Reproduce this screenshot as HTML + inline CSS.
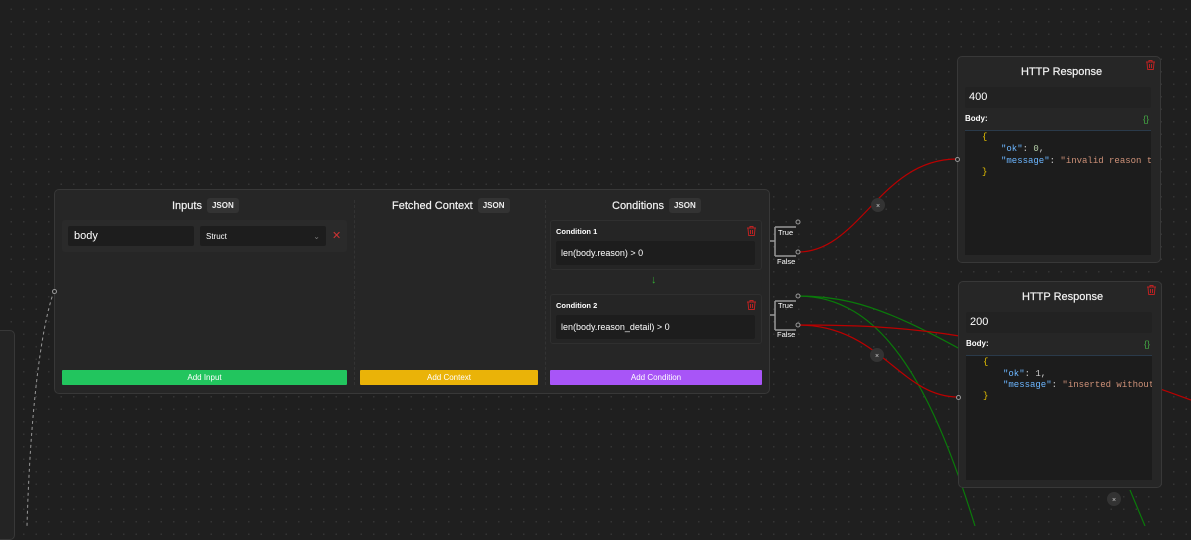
<!DOCTYPE html>
<html><head><meta charset="utf-8"><style>
*{box-sizing:border-box;margin:0;padding:0}
body{width:1191px;height:526px;overflow:hidden;background:#1f1f1f;background-image:radial-gradient(circle,#353535 0.7px,transparent 1px);background-size:12.5px 12.5px;background-position:5px 3px;font-family:"Liberation Sans",sans-serif;color:#fff;position:relative}
.abs{position:absolute}
.node{position:absolute;background:#262626;border:1px solid #383838;border-radius:5px}
.h{font-size:11px;color:#f2f2f2;-webkit-text-stroke:0.2px #f2f2f2}
.tag{display:inline-block;background:#333;border-radius:3px;font-size:8px;font-weight:bold;padding:3px 5px;color:#eee;margin-left:5px;vertical-align:1px;-webkit-text-stroke:0}
.btn{position:absolute;height:15px;font-size:8px;text-align:center;line-height:15px;color:#fff;border-radius:1px}
.inp{position:absolute;background:#1d1d1d;border-radius:2px}
.cond{position:absolute;background:#252525;border:1px solid #2f2f2f;border-radius:3px}
.code{font-family:"Liberation Mono","DejaVu Sans Mono",monospace;font-size:9px;position:absolute;white-space:pre}
.lbl{font-size:7.5px;font-weight:bold}
</style></head><body>
<svg class="abs" style="left:0;top:0" width="1191" height="526">
<path d="M54 291 C40 330 30 420 27 526" stroke="#999" stroke-width="1" stroke-dasharray="3 3" fill="none"/>
<path d="M798 252 C860 252 880 159 957 159" stroke="#b00" stroke-width="1.2" fill="none"/>
<path d="M798 296 C880 296 930 330 1150 460" stroke="#0a7a0a" stroke-width="1.2" fill="none"/>
<path d="M1130 490 L1145 526" stroke="#0a7a0a" stroke-width="1.2" fill="none"/>
<path d="M798 296 C880 296 930 380 975 526" stroke="#0a7a0a" stroke-width="1.2" fill="none"/>
<path d="M798 325 C880 325 900 397 958 397" stroke="#b00" stroke-width="1.2" fill="none"/>
<path d="M798 325 C900 325 1000 330 1191 400" stroke="#b00" stroke-width="1.2" fill="none"/>
<circle cx="878" cy="205" r="7" fill="#333"/><text x="878" y="208" font-size="7" fill="#ccc" text-anchor="middle">×</text>
<circle cx="877" cy="355" r="7" fill="#333"/><text x="877" y="358" font-size="7" fill="#ccc" text-anchor="middle">×</text>
<circle cx="1114" cy="499" r="7" fill="#333"/><text x="1114" y="502" font-size="7" fill="#ccc" text-anchor="middle">×</text>
</svg>
<div class="node" style="left:-10px;top:330px;width:25px;height:210px;background:#242424"></div>
<div class="node" style="left:54px;top:189px;width:716px;height:205px"></div>
<div class="abs" style="left:354px;top:200px;height:185px;border-left:1px dashed #333"></div>
<div class="abs" style="left:545px;top:200px;height:185px;border-left:1px dashed #333"></div>
<div class="abs h" style="left:172px;top:198px">Inputs<span class="tag">JSON</span></div>
<div class="abs h" style="left:392px;top:198px">Fetched Context<span class="tag">JSON</span></div>
<div class="abs h" style="left:612px;top:198px">Conditions<span class="tag">JSON</span></div>
<div class="cond" style="left:62px;top:220px;width:285px;height:32px;border:none;background:#2a2a2a"></div>
<div class="inp" style="left:68px;top:226px;width:126px;height:20px;font-size:11px;padding:4px 6px">body</div>
<div class="inp" style="left:200px;top:226px;width:126px;height:20px;font-size:8px;padding:6px 6px">Struct<span style="float:right;color:#777">⌄</span></div>
<div class="abs" style="left:332px;top:229px;color:#c33;font-size:11px">✕</div>
<div class="btn" style="left:62px;top:370px;width:285px;background:#22c55e">Add Input</div>
<div class="btn" style="left:360px;top:370px;width:178px;background:#eab308">Add Context</div>
<div class="btn" style="left:550px;top:370px;width:212px;background:#a855f7">Add Condition</div>
<div class="cond" style="left:550px;top:220px;width:212px;height:50px"></div>
<div class="abs lbl" style="left:556px;top:227px">Condition 1</div>
<div class="inp" style="left:556px;top:241px;width:199px;height:24px;font-size:9px;padding:7px 5px">len(body.reason) &gt; 0</div>
<div class="abs" style="left:651px;top:274px;color:#3a3;font-size:11px">↓</div>
<div class="cond" style="left:550px;top:294px;width:212px;height:50px"></div>
<div class="abs lbl" style="left:556px;top:301px">Condition 2</div>
<div class="inp" style="left:556px;top:315px;width:199px;height:24px;font-size:9px;padding:7px 5px">len(body.reason_detail) &gt; 0</div>
<svg class="abs" style="left:0;top:0" width="1191" height="526">
<g stroke="#b22" stroke-width="1" fill="none">
<path id="tr" d="M747 228h9M750 228v-1.5h3v1.5M748 228.5l.7 7h5.6l.7-7M750.5 230v4M752.5 230v4"/>
<use href="#tr" x="0" y="74"/>
<use href="#tr" x="398" y="-168"/>
<use href="#tr" x="399" y="57"/>
</g>
</svg>
<svg class="abs" style="left:760px;top:215px" width="50" height="130">
<g stroke="#999" stroke-width="1.5" fill="none"><path d="M10 26H15M15 12V41M15 12H36M15 41H36"/><path d="M10 100H15M15 86V115M15 86H36M15 115H36"/></g>
<g stroke="#999" fill="#222"><circle cx="38" cy="7" r="2"/><circle cx="38" cy="37" r="2"/><circle cx="38" cy="81" r="2"/><circle cx="38" cy="110" r="2"/></g>
</svg>
<div class="abs" style="left:778px;top:228px;font-size:7.5px">True</div>
<div class="abs" style="left:777px;top:257px;font-size:7.5px">False</div>
<div class="abs" style="left:778px;top:301px;font-size:7.5px">True</div>
<div class="abs" style="left:777px;top:330px;font-size:7.5px">False</div>
<div class="abs" style="left:52px;top:289px;width:5px;height:5px;border:1px solid #999;border-radius:50%;background:#222"></div>

<div class="node" style="left:957px;top:56px;width:204px;height:207px"></div>
<div class="abs h" style="left:1021px;top:66px">HTTP Response</div>
<div class="inp" style="left:965px;top:87px;width:186px;height:21px;font-size:11px;line-height:11px;padding:5px 4px;background:#222">400</div>
<div class="abs" style="left:965px;top:114px;font-size:8px;font-weight:bold">Body:</div>
<div class="abs" style="left:1143px;top:114px;font-size:9px;color:#4a4">{}</div>
<div class="abs" style="left:965px;top:130px;width:186px;height:125px;background:#1c1c1c;border-top:1px solid #2a3a4a"></div>
<div class="code" style="left:982px;top:132px;color:#e5c100">{</div>
<div class="code" style="left:1001px;top:144px"><span style="color:#6cb6ff">"ok"</span><span style="color:#ccc">: </span><span style="color:#b5cea8">0</span><span style="color:#ccc">,</span></div>
<div class="code" style="left:1001px;top:156px;width:150px;overflow:hidden"><span style="color:#6cb6ff">"message"</span><span style="color:#ccc">: </span><span style="color:#ce9178">"invalid reason type"</span></div>
<div class="code" style="left:982px;top:167px;color:#e5c100">}</div>
<div class="abs" style="left:955px;top:157px;width:5px;height:5px;border:1px solid #999;border-radius:50%;background:#222"></div>

<div class="node" style="left:958px;top:281px;width:204px;height:207px"></div>
<div class="abs h" style="left:1022px;top:291px">HTTP Response</div>
<div class="inp" style="left:966px;top:312px;width:186px;height:21px;font-size:11px;line-height:11px;padding:5px 4px;background:#222">200</div>
<div class="abs" style="left:966px;top:339px;font-size:8px;font-weight:bold">Body:</div>
<div class="abs" style="left:1144px;top:339px;font-size:9px;color:#4a4">{}</div>
<div class="abs" style="left:966px;top:355px;width:186px;height:125px;background:#1c1c1c;border-top:1px solid #2a3a4a"></div>
<div class="code" style="left:983px;top:357px;color:#e5c100">{</div>
<div class="code" style="left:1003px;top:369px"><span style="color:#6cb6ff">"ok"</span><span style="color:#ccc">: 1,</span></div>
<div class="code" style="left:1003px;top:380px;width:149px;overflow:hidden"><span style="color:#6cb6ff">"message"</span><span style="color:#ccc">: </span><span style="color:#ce9178">"inserted without reason"</span></div>
<div class="code" style="left:983px;top:391px;color:#e5c100">}</div>
<div class="abs" style="left:956px;top:395px;width:5px;height:5px;border:1px solid #999;border-radius:50%;background:#222"></div>
<svg class="abs" style="left:0;top:0" width="1191" height="526">
<g stroke="#b22" stroke-width="1" fill="none">
<path d="M1146 62h9M1149 62v-1.5h3v1.5M1147 62.5l.7 7h5.6l.7-7M1149.5 64v4M1151.5 64v4"/>
<path d="M1147 287h9M1150 287v-1.5h3v1.5M1148 287.5l.7 7h5.6l.7-7M1150.5 289v4M1152.5 289v4"/>
</g></svg>
</body></html>
